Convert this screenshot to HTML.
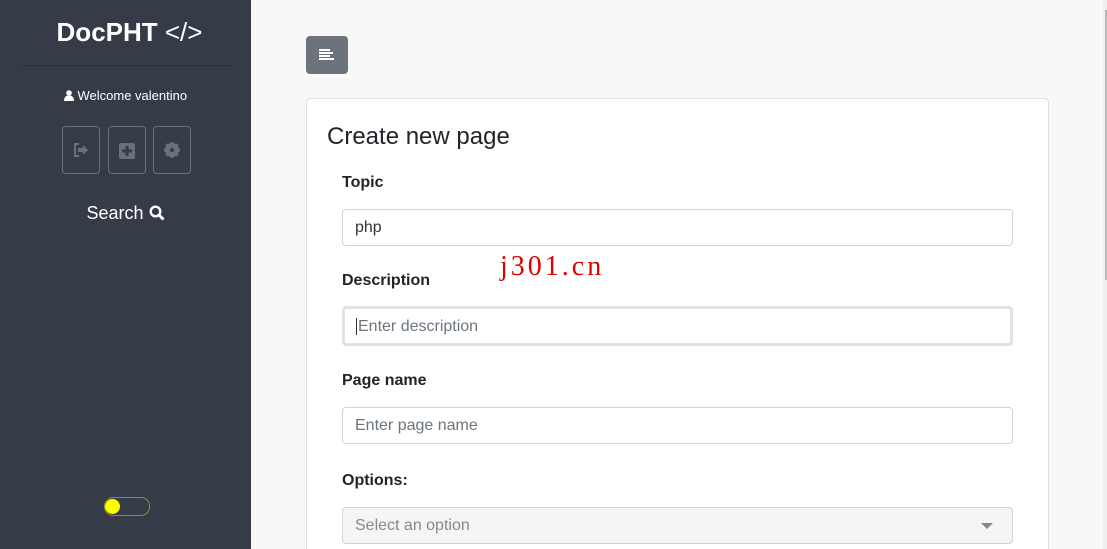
<!DOCTYPE html>
<html><head><meta charset="utf-8"><style>
*{margin:0;padding:0;box-sizing:border-box}
html,body{width:1107px;height:549px;overflow:hidden}
body{background:#f8f8f8;font-family:"Liberation Sans",sans-serif;position:relative}
.sb{position:absolute;left:0;top:0;width:251px;height:549px;background:#363b48;color:#fff}
.a{position:absolute}
.btn{position:absolute;top:126px;width:38px;height:48px;border:1px solid #6a6f7a;border-radius:4px}
.card{position:absolute;left:306px;top:98px;width:743px;height:451px;background:#fff;border:1px solid #e0e0e0;border-bottom:none;border-radius:4px 4px 0 0}
.lbl{position:absolute;left:342px;font-weight:bold;font-size:16px;color:#212529}
.inp{position:absolute;left:342px;width:671px;height:37px;border:1px solid #ced4da;border-radius:4px;background:#fff;font-size:16px;color:#6c757d;padding:9px 12px 0}
</style></head><body>
<div class="sb">
 <div class="a" style="left:4px;width:251px;top:17px;text-align:center;font-size:26px;font-weight:bold">DocPHT <span style="font-weight:normal">&lt;/&gt;</span></div>
 <div class="a" style="left:22px;width:210px;top:65px;border-top:1px solid #2b2f3a"></div>
 <div class="a" style="left:0;width:251px;top:88px;text-align:center;font-size:13px"><svg width="10" height="11" viewBox="0 0 10 11" style="vertical-align:-1px"><circle cx="5" cy="3" r="2.8" fill="#fff"/><path d="M0 11c0-4 2-5.5 5-5.5s5 1.5 5 5.5z" fill="#fff"/></svg> Welcome valentino</div>
 <div class="btn" style="left:62px"><svg class="a" style="left:10px;top:16px" width="16" height="14" viewBox="0 0 16 14"><path d="M6 1H2v12h4" stroke="#6a6f7a" stroke-width="2" fill="none"/><path d="M5 5h5V2l5 5-5 5V9H5z" fill="#6a6f7a"/></svg></div>
 <div class="btn" style="left:108px"><svg class="a" style="left:10px;top:16px" width="16" height="16"><rect width="16" height="16" rx="2" fill="#6a6f7a"/><path d="M8 3v10M3 8h10" stroke="#363b48" stroke-width="3"/></svg></div>
 <div class="btn" style="left:153px"><svg class="a" style="left:10px;top:15px" width="16" height="16" viewBox="0 0 16 16"><circle cx="8" cy="8" r="5" fill="none" stroke="#6a6f7a" stroke-width="4"/><path d="M8 0v16M0 8h16M2.3 2.3l11.4 11.4M13.7 2.3L2.3 13.7" stroke="#6a6f7a" stroke-width="3"/><circle cx="8" cy="8" r="2" fill="#363b48"/></svg></div>
 <div class="a" style="left:0;width:251px;top:203px;text-align:center;font-size:18px">Search <svg width="16" height="16" viewBox="0 0 16 16" style="vertical-align:-2px"><circle cx="6.5" cy="6.5" r="4.8" fill="none" stroke="#fff" stroke-width="2.4"/><path d="M10 10l4.5 4.5" stroke="#fff" stroke-width="3"/></svg></div>
 <div class="a" style="left:104px;top:497px;width:46px;height:19px;border:1px solid #8a8a3a;border-radius:9px"></div>
 <div class="a" style="left:105px;top:499px;width:15px;height:15px;border-radius:50%;background:#ffff00"></div>
</div>
<div class="a" style="left:306px;top:36px;width:42px;height:38px;background:#6c737d;border-radius:4px"><svg class="a" style="left:13px;top:13px" width="16" height="12"><path d="M0 1h11M0 4h14M0 7h11M0 10h15" stroke="#fff" stroke-width="2"/></svg></div>
<div class="card"></div>
<div class="a" style="left:327px;top:123px;font-size:24px;color:#212529">Create new page</div>
<div class="lbl" style="top:174px">Topic</div>
<div class="inp" style="top:209px;color:#333">php</div>
<div class="lbl" style="top:272px">Description</div>
<div class="inp" style="top:306px;height:40px;border:3px solid #e2e2e2;padding:9px 11px 0"><span style="border-left:1px solid #333;padding-left:1px">Enter description</span></div>
<div class="a" style="left:500px;top:251px;font-family:'Liberation Serif',serif;font-size:28px;color:#e00000;letter-spacing:3px">j301.cn</div>
<div class="lbl" style="top:372px">Page name</div>
<div class="inp" style="top:407px">Enter page name</div>
<div class="lbl" style="top:472px">Options:</div>
<div class="inp" style="top:507px;background:#f5f5f5;color:#888">Select an option<svg class="a" style="left:638px;top:15px" width="12" height="7"><path d="M0 0h12L6 6z" fill="#888"/></svg></div>
<div class="a" style="left:1103px;top:0;width:4px;height:549px;background:#eee"></div>
<div class="a" style="left:1105px;top:10px;width:2px;height:270px;background:#bbb"></div>
</body></html>
